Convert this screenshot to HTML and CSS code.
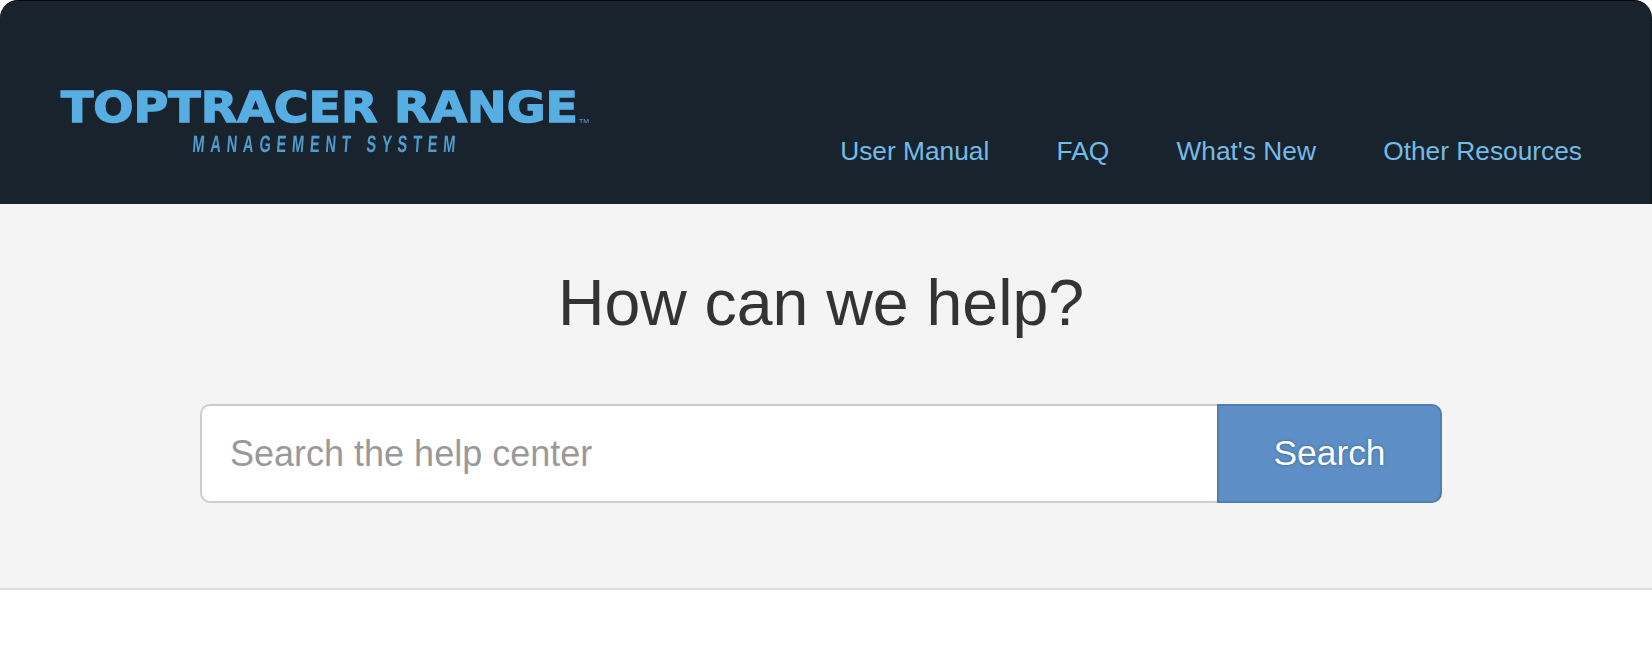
FILE: index.html
```html
<!DOCTYPE html>
<html lang="en">
<head>
    <meta charset="UTF-8">
    <meta name="viewport" content="width=device-width, initial-scale=1.0">
    <title>Toptracer Range Help Center</title>
    <link rel="stylesheet" href="styles.css">
</head>
<body>
    <header class="site-header">
        <a href="#" class="logo">
            <svg width="532" height="96" viewBox="0 0 532 96">
                <defs>
                    <filter id="soft"><feGaussianBlur stdDeviation="0.7"/></filter>
                </defs>
                <g filter="url(#soft)">
                    <text class="logo-main" x="1" y="55" textLength="517" lengthAdjust="spacingAndGlyphs">TOPTRACER RANGE</text>
                    <text class="logo-tm" x="519" y="56" textLength="10" lengthAdjust="spacingAndGlyphs">TM</text>
                    <text class="logo-sub" transform="translate(132 85) skewX(-4) scale(.62 1)" textLength="424" lengthAdjust="spacing">MANAGEMENT SYSTEM</text>
                </g>
            </svg>
        </a>
        <nav class="site-nav">
            <a href="#">User Manual</a>
            <a href="#">FAQ</a>
            <a href="#">What's New</a>
            <a href="#">Other Resources</a>
        </nav>
    </header>
    <section class="hero">
        <h1>How can we help?</h1>
        <form class="search-form">
            <input type="text" class="search-input" placeholder="Search the help center">
            <button type="button" class="search-btn">Search</button>
        </form>
    </section>
</body>
</html>
```

FILE: styles.css
```css
body {
    font-family: 'Liberation Sans', Arial, sans-serif;
    background: #fff;
    margin: 0;
    padding: 0;
    height: 658px;
    overflow: hidden;
}

.site-header {
    height: 203px;
    background: #19232e;
    border-top: 1px solid #05080c;
    border-right: 1px solid #0d141b;
    border-radius: 18px 18px 0 0;
    display: flex;
    justify-content: space-between;
    align-items: flex-start;
}

.logo {
    display: block;
    margin: 66px 0 0 60px;
    height: 96px;
}

.logo-main {
    font-family: 'DejaVu Sans', Arial, sans-serif;
    font-size: 42px;
    font-weight: 700;
    fill: #57aee3;
    stroke: #57aee3;
    stroke-width: 1.4px;
}

.logo-tm {
    font-family: 'Liberation Sans', Arial, sans-serif;
    font-size: 5px;
    fill: #57aee3;
}

.logo-sub {
    font-family: 'Liberation Sans', Arial, sans-serif;
    font-size: 23.5px;
    font-weight: 700;
    fill: #4f9bcb;
}

.site-nav {
    display: flex;
    gap: 67.3px;
    margin: 134px 69px 0 0;
}

.site-nav a {
    color: #73bce6;
    text-decoration: none;
    font-size: 26.3px;
    line-height: 32px;
}

.hero {
    height: 384px;
    background: #f4f4f4;
    border-bottom: 2px solid #dcdcdc;
    padding-right: 10px;
    display: flex;
    flex-direction: column;
    align-items: center;
}

.hero h1 {
    margin: 64px 0 0;
    font-size: 64.4px;
    line-height: 70px;
    font-weight: 400;
    color: #333;
}

.search-form {
    display: flex;
    width: 1242px;
    height: 99px;
    margin-top: 66px;
}

.search-input {
    flex: 1;
    min-width: 0;
    box-sizing: border-box;
    border: 2px solid #ccc;
    border-right: 0;
    border-radius: 10px 0 0 10px;
    background: #fff;
    padding: 0 28px;
    font-family: inherit;
    font-size: 36px;
    color: #333;
    outline: none;
}

.search-input::placeholder {
    color: #999;
    opacity: 1;
}

.search-btn {
    width: 225px;
    box-sizing: border-box;
    border: 2px solid #4f7fb0;
    border-radius: 0 10px 10px 0;
    background: #5d8fc6;
    color: #fff;
    font-family: inherit;
    font-size: 35.4px;
    text-shadow: 0 0 3px rgba(30, 60, 100, 0.6);
    padding: 0;
}
```
